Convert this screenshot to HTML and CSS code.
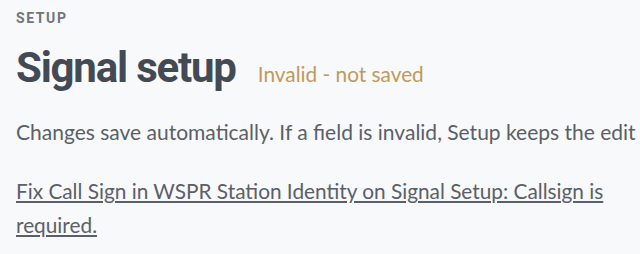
FILE: index.html
```html
<!DOCTYPE html>
<html lang="en">
<head>
    <meta charset="UTF-8">
    <title>Signal setup</title>
    <link rel="stylesheet" href="styles.css">
</head>
<body>
    <div class="page">
        <div class="eyebrow">Setup</div>
        <div class="title-row">
            <h1>Signal setup</h1>
            <span class="status">Invalid - not saved</span>
        </div>
        <p class="intro">Changes save automatically. If a field is invalid, Setup keeps the edit</p>
        <div class="issues">
            <a href="#callsign">Fix Call Sign in WSPR Station Identity on Signal Setup: Callsign is required.</a>
        </div>
    </div>
</body>
</html>
```

FILE: styles.css
```css
body {
    margin: 0;
    background: #f8f9fa;
    font-family: Lato, "Open Sans", sans-serif;
    color: #5b6068;
    overflow: hidden;
}
.page {
    padding: 8px 16px;
}
.eyebrow {
    font-family: Roboto, sans-serif;
    font-weight: 700;
    font-size: 14px;
    letter-spacing: 1.6px;
    text-transform: uppercase;
    color: #70757c;
    line-height: 20px;
}
.title-row {
    display: flex;
    align-items: baseline;
    gap: 22px;
    margin-top: 14px;
}
h1 {
    margin: 0;
    font-family: Roboto, sans-serif;
    font-weight: 700;
    font-size: 42px;
    letter-spacing: -1.2px;
    line-height: 52px;
    color: #434a54;
}
.status {
    font-size: 20.8px;
    color: #c19a5b;
}
.intro {
    margin: 22px 0 0;
    font-size: 21px;
    line-height: 32px;
    white-space: nowrap;
}
.issues {
    width: 600px;
    margin-top: 26px;
    font-size: 20.8px;
    line-height: 34px;
}
.issues a {
    color: #5b6068;
}
```
